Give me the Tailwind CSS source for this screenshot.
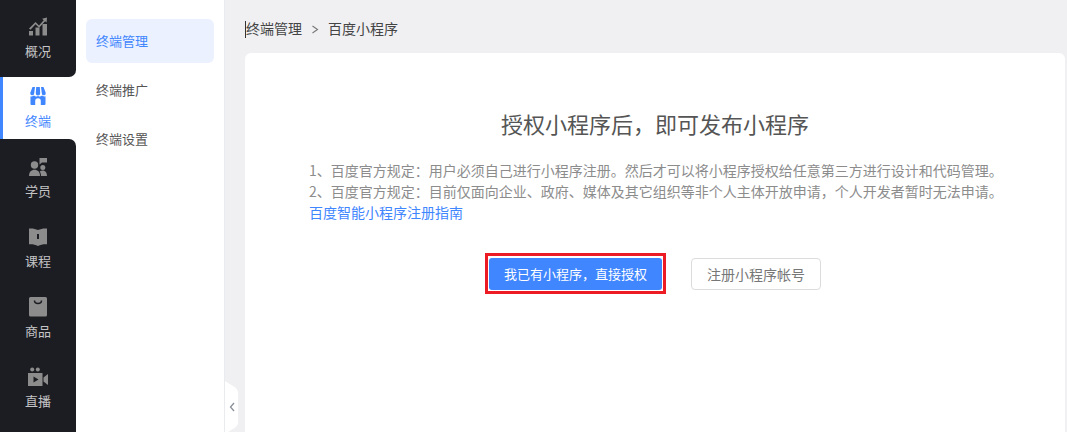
<!DOCTYPE html>
<html lang="zh-CN">
  <head>
    <meta charset="UTF-8" />
    <meta name="viewport" content="width=device-width, initial-scale=1.0" />
    <title>终端管理</title>
    <script src="https://cdn.jsdelivr.net/npm/@tailwindcss/browser@4"></script>
  </head>
  <body class="bg-[#f0f0f3] overflow-hidden font-['Noto_Sans_CJK_SC','Noto_Sans',sans-serif]">
    <div class="flex h-[432px] w-[1067px] overflow-hidden">
      <!-- 一级导航 -->
      <nav class="w-[76px] h-full shrink-0 bg-white flex flex-col text-[13px] leading-[20px] text-[#c4c4c6]">
        <a class="h-[77px] pt-[17px] flex flex-col items-center bg-[#1c1d22] rounded-br-[7px]">
          <svg class="w-5 h-5" viewBox="0 0 20 20" fill="#8c8c8c">
            <rect x="1" y="14" width="4" height="4.500" />
            <rect x="7.500" y="10.500" width="4" height="8" />
            <rect x="14.500" y="7" width="4.500" height="11.500" />
            <path d="M1 11.500 7.500 5l3.500 3.500 4.700-5.200-1.600-1.500L19 .6l-.4 5-1.500-1.400-6 6.600L7.500 7.200l-5 5.600z" />
          </svg>
          <span class="mt-[4px]">概况</span>
        </a>
        <a class="h-[62px] pt-[9px] flex flex-col items-center bg-white border-l-[3px] border-[#3f86ff] pr-[3px] text-[#3f86ff]">
          <svg class="w-5 h-5" viewBox="0 0 20 20" fill="#3f86ff">
            <path d="M4.500 1H7L6.200 7.200a1.900 1.900 0 0 1-3.900.2 2 2 0 0 1 0-.6zM8.200 1h3.600l.4 6.200a2.200 2.200 0 0 1-4.400 0zM13 1h2.500l2.200 5.800a2 2 0 0 1 0 .6 1.900 1.900 0 0 1-3.900-.2z" />
            <path d="M2.500 10.200c1.200.4 2.600.2 3.500-.6 1 .9 2.700 1.200 4 .5 1.300.7 3 .4 4-.5.900.8 2.300 1 3.500.6V18a1 1 0 0 1-1 1h-3.700v-4a2.800 2.800 0 0 0-5.600 0v4H3.500a1 1 0 0 1-1-1z" />
          </svg>
          <span class="mt-[5px]">终端</span>
        </a>
        <div class="flex-1 bg-[#1c1d22] rounded-tr-[7px]">
          <a class="h-[70px] pt-[18px] flex flex-col items-center">
            <svg class="w-5 h-5" viewBox="0 0 20 20" fill="#8c8c8c">
              <circle cx="6.500" cy="8" r="3.700" />
              <path d="M1 19c0-4 2.300-6.200 5.500-6.200S12 15 12 19z" />
              <circle cx="14.800" cy="10.500" r="2.500" />
              <path d="M13 19c0-2-.4-3.500-1.300-4.600.8-.6 1.900-1 3.100-1 2.500 0 4.200 2.200 4.200 5.600z" />
              <path d="M11.500 1H19v4.500h-5l-2.500 2z" />
            </svg>
            <span class="mt-[4px]">学员</span>
          </a>
          <a class="h-[70px] pt-[18px] flex flex-col items-center">
            <svg class="w-5 h-5" viewBox="0 0 20 20" fill="#8c8c8c">
              <path fill-rule="evenodd" d="M1 1.500c3-.3 6.300.1 9 1.500 2.700-1.400 6-1.800 9-1.500v15.800c-3-.3-6.300.2-9 1.700-2.700-1.500-6-2-9-1.700zM9 7v5h2V7z" />
            </svg>
            <span class="mt-[4px]">课程</span>
          </a>
          <a class="h-[70px] pt-[18px] flex flex-col items-center">
            <svg class="w-5 h-5" viewBox="0 0 20 20">
              <path fill="#8c8c8c" d="M2.500 0h15A1.500 1.500 0 0 1 19 1.500V18a1.500 1.500 0 0 1-1.500 1.500h-15A1.500 1.500 0 0 1 1 18V1.500A1.500 1.500 0 0 1 2.500 0z" />
              <path fill="none" stroke="#1c1d22" stroke-width="1.500" d="M6.500 3.500c0 2 1.500 3 3.500 3s3.500-1 3.500-3" />
            </svg>
            <span class="mt-[4px]">商品</span>
          </a>
          <a class="h-[70px] pt-[18px] flex flex-col items-center">
            <svg class="w-5 h-5" viewBox="0 0 20 20" fill="#8c8c8c">
              <circle cx="4.200" cy="2.500" r="2" />
              <circle cx="9.800" cy="2.500" r="2" />
              <path fill-rule="evenodd" d="M0 6h14.500v13H0zM5.500 9.500v6l5-3z" />
              <path d="M15.500 10.500 20 7v11l-4.500-3.500z" />
            </svg>
            <span class="mt-[4px]">直播</span>
          </a>
        </div>
      </nav>

      <!-- 二级导航 -->
      <aside class="w-[148px] h-full shrink-0 bg-white px-[10px] pt-[19px] flex flex-col gap-[5px] text-[13px] leading-[20px] text-[#555]">
        <a class="h-[44px] px-[10px] pt-[12px] rounded-[6px] bg-[#ebf1fe] text-[#3f86ff]">终端管理</a>
        <a class="h-[44px] px-[10px] pt-[12px]">终端推广</a>
        <a class="h-[44px] px-[10px] pt-[12px]">终端设置</a>
      </aside>

      <!-- 内容 -->
      <main class="relative flex-1 min-w-0 border-l border-[#eaebee] pl-[20px] pr-[2px] flex flex-col">
        <svg class="absolute left-0 top-[381px] w-[14px] h-[51px]" viewBox="0 0 14 51">
          <path fill="#fff" d="M0 0 9.500 6C12 7.600 13 9.500 13 12V41c0 2.500-1 4.400-3.500 6L3 51H0z" />
          <path fill="none" stroke="#8a8f99" stroke-width="1.300" d="M9 22 5.500 26 9 30" />
        </svg>
        <div class="h-[53px] shrink-0 pt-[18px] flex items-start text-[14px] leading-[20px] text-[#444]">
          <i class="w-px h-[17px] mt-[3px] bg-[#333]"></i>
          <span>终端管理</span>
          <svg class="w-[8px] h-[20px] mt-px ml-[9px] mr-[9px]" viewBox="0 0 8 20" fill="none" stroke="#777" stroke-width="1.100">
            <path d="M1.500 7 6.500 10.500 1.500 14" />
          </svg>
          <span>百度小程序</span>
        </div>
        <section class="flex-1 bg-white rounded-t-[6px] px-[64px] pt-[54px]">
          <h1 class="text-[22px] leading-[32px] text-[#555] text-center">授权小程序后，即可发布小程序</h1>
          <div class="mt-[21px] text-[14px] leading-[21px] text-[#8c8c8c] whitespace-nowrap">
            <p>1、百度官方规定：用户必须自己进行小程序注册。然后才可以将小程序授权给任意第三方进行设计和代码管理。</p>
            <p>2、百度官方规定：目前仅面向企业、政府、媒体及其它组织等非个人主体开放申请，个人开发者暂时无法申请。</p>
            <a class="block text-[#3f86ff]">百度智能小程序注册指南</a>
          </div>
          <div class="mt-[35px] flex justify-center gap-[29px]">
            <div class="relative">
              <button class="h-[32px] w-[173px] rounded-[3px] bg-[#3f86ff] text-[13px] text-white">我已有小程序，直接授权</button>
              <span class="absolute left-[-4px] right-[-4px] top-[-5px] bottom-[-4px] border-[3px] border-[#ed1c24]"></span>
            </div>
            <button class="h-[32px] w-[130px] rounded-[4px] border border-[#dcdcdc] bg-white text-[14px] text-[#777]">注册小程序帐号</button>
          </div>
        </section>
      </main>
    </div>
  </body>
</html>
